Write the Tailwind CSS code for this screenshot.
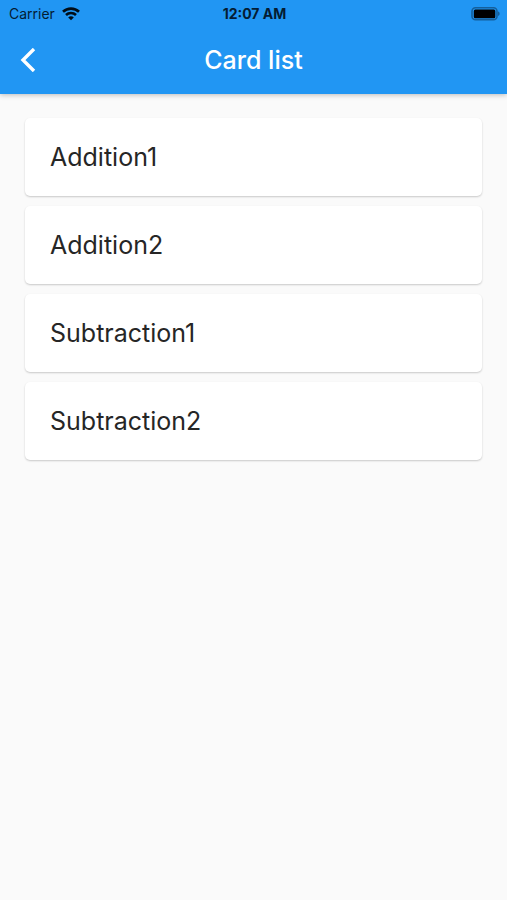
<!DOCTYPE html>
<html lang="en">
<head>
<meta charset="utf-8">
<meta name="viewport" content="width=device-width, initial-scale=1">
<title>Card list</title>
<script src="https://cdn.jsdelivr.net/npm/@tailwindcss/browser@4"></script>
</head>
<body class="min-h-screen bg-[#fafafa] font-[Inter,'Liberation_Sans',sans-serif] text-[#262626]">
<header class="bg-[#2196f3] shadow-[0_1px_5px_rgba(0,0,0,0.25)]">
  <div class="grid h-7 grid-cols-3 items-center pr-[7px] pl-[9px] text-[#041c33]">
    <div class="flex items-center gap-[7px] text-sm">
      <span>Carrier</span>
      <svg class="h-[14px] w-[18px]" viewBox="0 0 18 14" fill="none" stroke="#000d18" stroke-width="2.6" aria-label="Wi-Fi">
        <path d="M1 4.8C5.4 .5 12.6 .5 17 4.8"/>
        <path d="M4 8c2.8-2.7 7.2-2.7 10 0"/>
        <path d="M9 13.2 6.2 10.4c1.6-1.5 4-1.5 5.6 0z" fill="#000d18" stroke="none"/>
      </svg>
    </div>
    <div class="text-center text-sm font-bold">12:07 AM</div>
    <svg class="h-[14px] w-[29px] justify-self-end" viewBox="0 0 29 14" aria-label="Battery">
      <rect x="1" y="0.800" width="25" height="12" rx="3.500" fill="none" stroke="#155f9b" stroke-width="1.600"/>
      <rect x="2.800" y="2.500" width="21.500" height="8.800" rx="1.500" fill="#000"/>
      <path d="M27 4.600c2.200.6 2.200 3.800 0 4.400z" fill="#155f9b"/>
    </svg>
  </div>
  <div class="grid h-[66px] grid-cols-[56px_1fr_56px] items-center pb-[2px]">
    <button type="button" aria-label="Back" class="flex h-12 items-center justify-center">
      <svg class="h-6 w-4" viewBox="0 0 16 24" fill="none" stroke="#fff" stroke-width="3.400"><path d="M14 1 3 12l11 11"/></svg>
    </button>
    <h1 class="text-center text-[25px] leading-8 font-medium text-white">Card list</h1>
  </div>
</header>
<main class="px-[25px] py-6">
  <ul class="flex flex-col gap-[10px] text-[25px] leading-8">
    <li><a href="#addition1" class="flex h-[78px] items-center rounded-[5px] bg-white px-[25px] shadow-[0_1px_2px_rgba(0,0,0,0.2)]">Addition1</a></li>
    <li><a href="#addition2" class="flex h-[78px] items-center rounded-[5px] bg-white px-[25px] shadow-[0_1px_2px_rgba(0,0,0,0.2)]">Addition2</a></li>
    <li><a href="#subtraction1" class="flex h-[78px] items-center rounded-[5px] bg-white px-[25px] shadow-[0_1px_2px_rgba(0,0,0,0.2)]">Subtraction1</a></li>
    <li><a href="#subtraction2" class="flex h-[78px] items-center rounded-[5px] bg-white px-[25px] shadow-[0_1px_2px_rgba(0,0,0,0.2)]">Subtraction2</a></li>
  </ul>
</main>
</body>
</html>
